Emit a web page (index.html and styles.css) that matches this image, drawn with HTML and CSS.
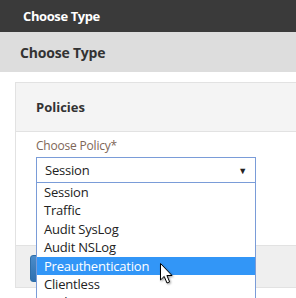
FILE: index.html
```
<!DOCTYPE html>
<html lang="en">
  <head>
    <meta charset="UTF-8" />
    <title>Choose Type</title>
    <link rel="stylesheet" href="styles.css">
  </head>

  <body>
    <div class="topbar">Choose Type</div>
    <div class="titlebar">Choose Type</div>

    <div class="content">
      <div class="panel">
        <div class="panel-head">Policies</div>
        <div class="panel-body">
          <div class="field-label">Choose Policy*</div>
          <div class="select-wrap">
            <div class="select">
              <span>Session</span>
              <span class="arrow">&#9660;</span>
            </div>
            <ul class="options">
              <li>Session</li>
              <li>Traffic</li>
              <li>Audit SysLog</li>
              <li>Audit NSLog</li>
              <li class="active">Preauthentication</li>
              <li>Clientless</li>
              <li>Authorization</li>
            </ul>
            <svg class="cursor" width="16" height="24" viewBox="0 0 16 24">
              <path d="M1.5 1.5 L1.5 18 L5.2 14.4 L8 21 L10.6 19.9 L7.9 13.5 L13 13.5 Z" fill="#fff" stroke="#000" stroke-width="1" stroke-linejoin="miter" />
            </svg>
          </div>
        </div>
        <div class="panel-foot">
          <button class="btn">Continue</button>
        </div>
      </div>
    </div>
  </body>
</html>
```

FILE: styles.css
```
body {
  margin: 0;
  font-family: "Open Sans", "Noto Sans", sans-serif;
  background-color: #fff;
  width: 296px;
  height: 298px;
  overflow: hidden;
}

.topbar {
  height: 32px;
  line-height: 32px;
  padding-left: 23px;
  background-color: #3a3a3a;
  color: #fff;
  font-size: 13px;
  font-weight: bold;
  letter-spacing: -0.4px;
}

.titlebar {
  height: 40px;
  line-height: 42px;
  padding-left: 20px;
  background-color: #dddddd;
  color: #333;
  font-size: 14px;
  font-weight: bold;
  letter-spacing: -0.2px;
}

.content {
  padding: 10px 0 0 15px;
}

.panel {
  border: 1px solid #e2e2e2;
  border-right: none;
}

.panel-head {
  height: 48px;
  line-height: 49px;
  padding-left: 20px;
  background-color: #f4f4f4;
  border-bottom: 1px solid #e2e2e2;
  color: #333;
  font-size: 13px;
  font-weight: bold;
}

.panel-body {
  height: 113px;
  padding: 6px 0 0 20px;
  box-sizing: border-box;
  background-color: #fff;
}

.field-label {
  color: #7e6657;
  font-size: 12px;
  line-height: 16px;
  letter-spacing: -0.2px;
}

.select-wrap {
  position: relative;
  width: 220px;
  margin-top: 3px;
}

.select {
  display: flex;
  justify-content: space-between;
  align-items: center;
  height: 26px;
  padding: 0 8px;
  box-sizing: border-box;
  border: 1px solid #7a9cd8;
  color: #222;
  font-size: 13px;
  letter-spacing: -0.2px;
}

.arrow {
  font-size: 9px;
  color: #222;
}

.options {
  position: absolute;
  top: 26px;
  left: 0;
  right: 0;
  margin: 0;
  padding: 0;
  list-style: none;
  background-color: #fff;
  border: 1px solid #7a9cd8;
  border-top: none;
  z-index: 2;
}

.options li {
  height: 18.4px;
  line-height: 19px;
  padding-left: 7px;
  color: #222;
  font-size: 13px;
  letter-spacing: -0.2px;
  overflow: hidden;
}

.options li.active {
  background-color: #3296f7;
  color: #fff;
}

.cursor {
  position: absolute;
  left: 123px;
  top: 105px;
  z-index: 3;
  filter: drop-shadow(1px 1px 1px rgba(0, 0, 0, 0.4));
}

.panel-foot {
  height: 42px;
  padding: 9px 0 0 14px;
  box-sizing: border-box;
  background-color: #efefef;
  border-top: 1px solid #e2e2e2;
}

.btn {
  width: 90px;
  height: 27px;
  border: 1px solid #2f6ea8;
  border-radius: 3px;
  background: linear-gradient(#4a8ccb, #2f70b0);
  color: #fff;
  font-family: inherit;
  font-size: 12px;
}
```
